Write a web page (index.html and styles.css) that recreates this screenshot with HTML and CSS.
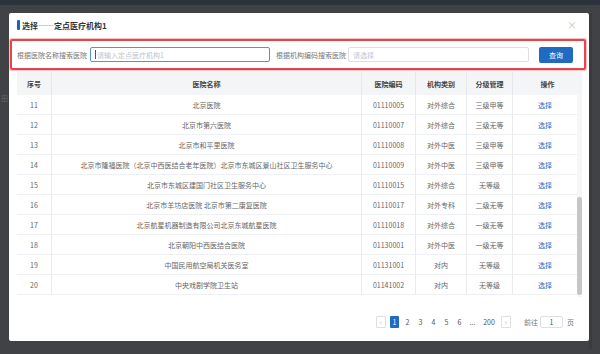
FILE: index.html
```html
<!DOCTYPE html>
<html lang="zh">
<head>
<meta charset="utf-8">
<link rel="stylesheet" href="styles.css">
</head>
<body>
<div class="topbar"></div>
<div class="stage">
  <div class="side side-left"><span class="ghost">田</span></div>
  <div class="modal">
    <div class="modal-head">
      <div class="title"><span class="title-bar"></span>选择——定点医疗机构1</div>
      <span class="close">×</span>
    </div>
    <div class="search">
      <span class="label">根据医院名称搜索医院</span>
      <div class="input input-focus"><span class="caret"></span><span class="ph">请输入定点医疗机构1</span></div>
      <span class="label label-2">根据机构编码搜索医院</span>
      <div class="input input-2"><span class="ph">请选择</span></div>
      <button class="btn">查询</button>
    </div>
    <div class="grid">
      <div class="row head">
        <div class="c c-no">序号</div>
        <div class="c c-name">医院名称</div>
        <div class="c c-code">医院编码</div>
        <div class="c c-type">机构类别</div>
        <div class="c c-grade">分级管理</div>
        <div class="c c-op c-op-head">操作</div>
      </div>
      <div class="body">
        <div class="rows">
          <div class="row"><div class="c c-no">11</div><div class="c c-name">北京医院</div><div class="c c-code">01110005</div><div class="c c-type">对外综合</div><div class="c c-grade">三级甲等</div><div class="c c-op"><a class="link">选择</a></div></div>
          <div class="row"><div class="c c-no">12</div><div class="c c-name">北京市第六医院</div><div class="c c-code">01110007</div><div class="c c-type">对外综合</div><div class="c c-grade">三级无等</div><div class="c c-op"><a class="link">选择</a></div></div>
          <div class="row"><div class="c c-no">13</div><div class="c c-name">北京市和平里医院</div><div class="c c-code">01110008</div><div class="c c-type">对外中医</div><div class="c c-grade">三级甲等</div><div class="c c-op"><a class="link">选择</a></div></div>
          <div class="row"><div class="c c-no">14</div><div class="c c-name">北京市隆福医院（北京中西医结合老年医院）北京市东城区景山社区卫生服务中心</div><div class="c c-code">01110009</div><div class="c c-type">对外中医</div><div class="c c-grade">三级甲等</div><div class="c c-op"><a class="link">选择</a></div></div>
          <div class="row"><div class="c c-no">15</div><div class="c c-name">北京市东城区建国门社区卫生服务中心</div><div class="c c-code">01110015</div><div class="c c-type">对外综合</div><div class="c c-grade">无等级</div><div class="c c-op"><a class="link">选择</a></div></div>
          <div class="row"><div class="c c-no">16</div><div class="c c-name">北京市羊坊店医院 北京市第二康复医院</div><div class="c c-code">01110017</div><div class="c c-type">对外专科</div><div class="c c-grade">二级无等</div><div class="c c-op"><a class="link">选择</a></div></div>
          <div class="row"><div class="c c-no">17</div><div class="c c-name">北京航星机器制造有限公司北京东城航星医院</div><div class="c c-code">01110018</div><div class="c c-type">对外综合</div><div class="c c-grade">一级无等</div><div class="c c-op"><a class="link">选择</a></div></div>
          <div class="row"><div class="c c-no">18</div><div class="c c-name">北京朝阳中西医结合医院</div><div class="c c-code">01130001</div><div class="c c-type">对外中医</div><div class="c c-grade">一级无等</div><div class="c c-op"><a class="link">选择</a></div></div>
          <div class="row"><div class="c c-no">19</div><div class="c c-name">中国民用航空局机关医务室</div><div class="c c-code">01131001</div><div class="c c-type">对内</div><div class="c c-grade">无等级</div><div class="c c-op"><a class="link">选择</a></div></div>
          <div class="row"><div class="c c-no">20</div><div class="c c-name">中央戏剧学院卫生站</div><div class="c c-code">01141002</div><div class="c c-type">对内</div><div class="c c-grade">无等级</div><div class="c c-op"><a class="link">选择</a></div></div>
        </div>
        <div class="track"><div class="thumb"></div></div>
      </div>
    </div>
    <div class="pager">
      <span class="pbtn">&lsaquo;</span>
      <span class="pg active">1</span>
      <span class="pg">2</span>
      <span class="pg">3</span>
      <span class="pg">4</span>
      <span class="pg">5</span>
      <span class="pg">6</span>
      <span class="pg">...</span>
      <span class="pg pg-wide">200</span>
      <span class="pbtn">&rsaquo;</span>
      <span class="goto">前往</span>
      <span class="pinput">1</span>
      <span class="unit">页</span>
    </div>
  </div>
  <div class="side side-right"></div>
</div>
</body>
</html>
```

FILE: styles.css
```css
* { box-sizing: border-box; }
html, body {
  margin: 0;
  padding: 0;
  width: 600px;
  height: 354px;
  overflow: hidden;
}
body {
  background: #414245;
  font-family: "Noto Sans CJK SC", "Noto Sans", sans-serif;
  font-size: 7px;
  color: #666;
}
.topbar {
  height: 5px;
  background: #2c323b;
}
.stage {
  display: flex;
  padding-top: 8px;
}
.side {
  width: 9px;
  height: 336px;
}
.side-left {
  position: relative;
}
.ghost {
  position: absolute;
  left: 1px;
  top: 80px;
  font-size: 7px;
  color: #666;
}
.side-right {
  width: 11px;
  border-left: 3px solid #3a3b3e;
}
.modal {
  width: 580px;
  height: 328px;
  background: #fff;
  border-radius: 2px;
  display: flex;
  flex-direction: column;
}
.modal-head {
  height: 26px;
  display: flex;
  align-items: center;
  justify-content: space-between;
  padding: 0 12px 2px 8px;
}
.title {
  display: flex;
  align-items: center;
  font-size: 8px;
  font-weight: 700;
  color: #333;
}
.title-bar {
  width: 3px;
  height: 10px;
  background: #1e63b8;
  border-radius: 1px;
  margin-right: 2px;
}
.close {
  font-size: 10px;
  color: #c8c8c8;
  line-height: 1;
}
.search {
  margin: 0 3px 0 1px;
  height: 31px;
  border: 2px solid #e3454b;
  box-shadow: 0 0 1px 0.5px rgba(227, 69, 75, 0.35);
  border-radius: 2px;
  display: flex;
  align-items: center;
  padding-left: 5px;
}
.label {
  color: #777;
  white-space: nowrap;
  width: 73px;
}
.label-2 {
  width: 72px;
  margin-left: 6px;
}
.input {
  height: 15px;
  border: 1px solid #dcdfe6;
  border-radius: 2px;
  display: flex;
  align-items: center;
  padding-left: 4px;
}
.input-focus {
  width: 180px;
  border-color: #5b90d8;
}
.input-2 {
  width: 181px;
}
.caret {
  width: 1px;
  height: 9px;
  background: #555;
  margin-right: 1px;
}
.ph {
  color: #c0c4cc;
}
.btn {
  margin-left: 10px;
  width: 34px;
  height: 16px;
  border: none;
  border-radius: 2px;
  background: #1e6bc1;
  color: #fff;
  font-family: inherit;
  font-size: 7px;
  padding: 0;
}
.grid {
  margin: 2px 7px 0 8px;
}
.row {
  display: flex;
  height: 20px;
  border-bottom: 1px solid #eef0f3;
}
.row.head {
  height: 23px;
  background: #f4f5f7;
  color: #444;
  font-weight: 700;
  border-bottom: none;
}
.c {
  display: flex;
  align-items: center;
  justify-content: center;
  white-space: nowrap;
  border-right: 1px solid #e8eaee;
}
.c-no { width: 35px; }
.c-name { width: 310px; }
.c-code { width: 54px; }
.c-type { width: 51px; }
.c-grade { width: 46px; }
.c-op { width: 64px; border-right: none; }
.c-op-head { width: 69px; }
.head .c { border-right-color: #e6e8ec; }
.body {
  display: flex;
}
.rows {
  width: 560px;
}
.link {
  color: #2a6cc4;
}
.track {
  width: 5px;
  height: 202px;
  background: #f6f6f6;
  padding-top: 102px;
}
.thumb {
  width: 5px;
  height: 98px;
  background: #c6c6c6;
  border-radius: 3px;
}
.pager {
  display: flex;
  align-items: center;
  justify-content: flex-end;
  gap: 4px;
  padding-right: 15px;
  margin-top: 19px;
  color: #555;
}
.pbtn {
  width: 10px;
  height: 12px;
  border: 1px solid #dcdfe6;
  border-radius: 1px;
  display: flex;
  align-items: center;
  justify-content: center;
  color: #bbb;
  font-size: 8px;
  line-height: 1;
}
.pg {
  width: 9px;
  height: 12px;
  display: flex;
  align-items: center;
  justify-content: center;
}
.pg-wide { width: 16px; }
.pg.active {
  background: #1e6bc1;
  color: #fff;
  border-radius: 1px;
}
.goto {
  margin-left: 9px;
  color: #777;
}
.pinput {
  width: 23px;
  height: 12px;
  border: 1px solid #dcdfe6;
  border-radius: 2px;
  display: flex;
  align-items: center;
  justify-content: center;
  margin-left: -2px;
}
.unit { color: #777; }
```
